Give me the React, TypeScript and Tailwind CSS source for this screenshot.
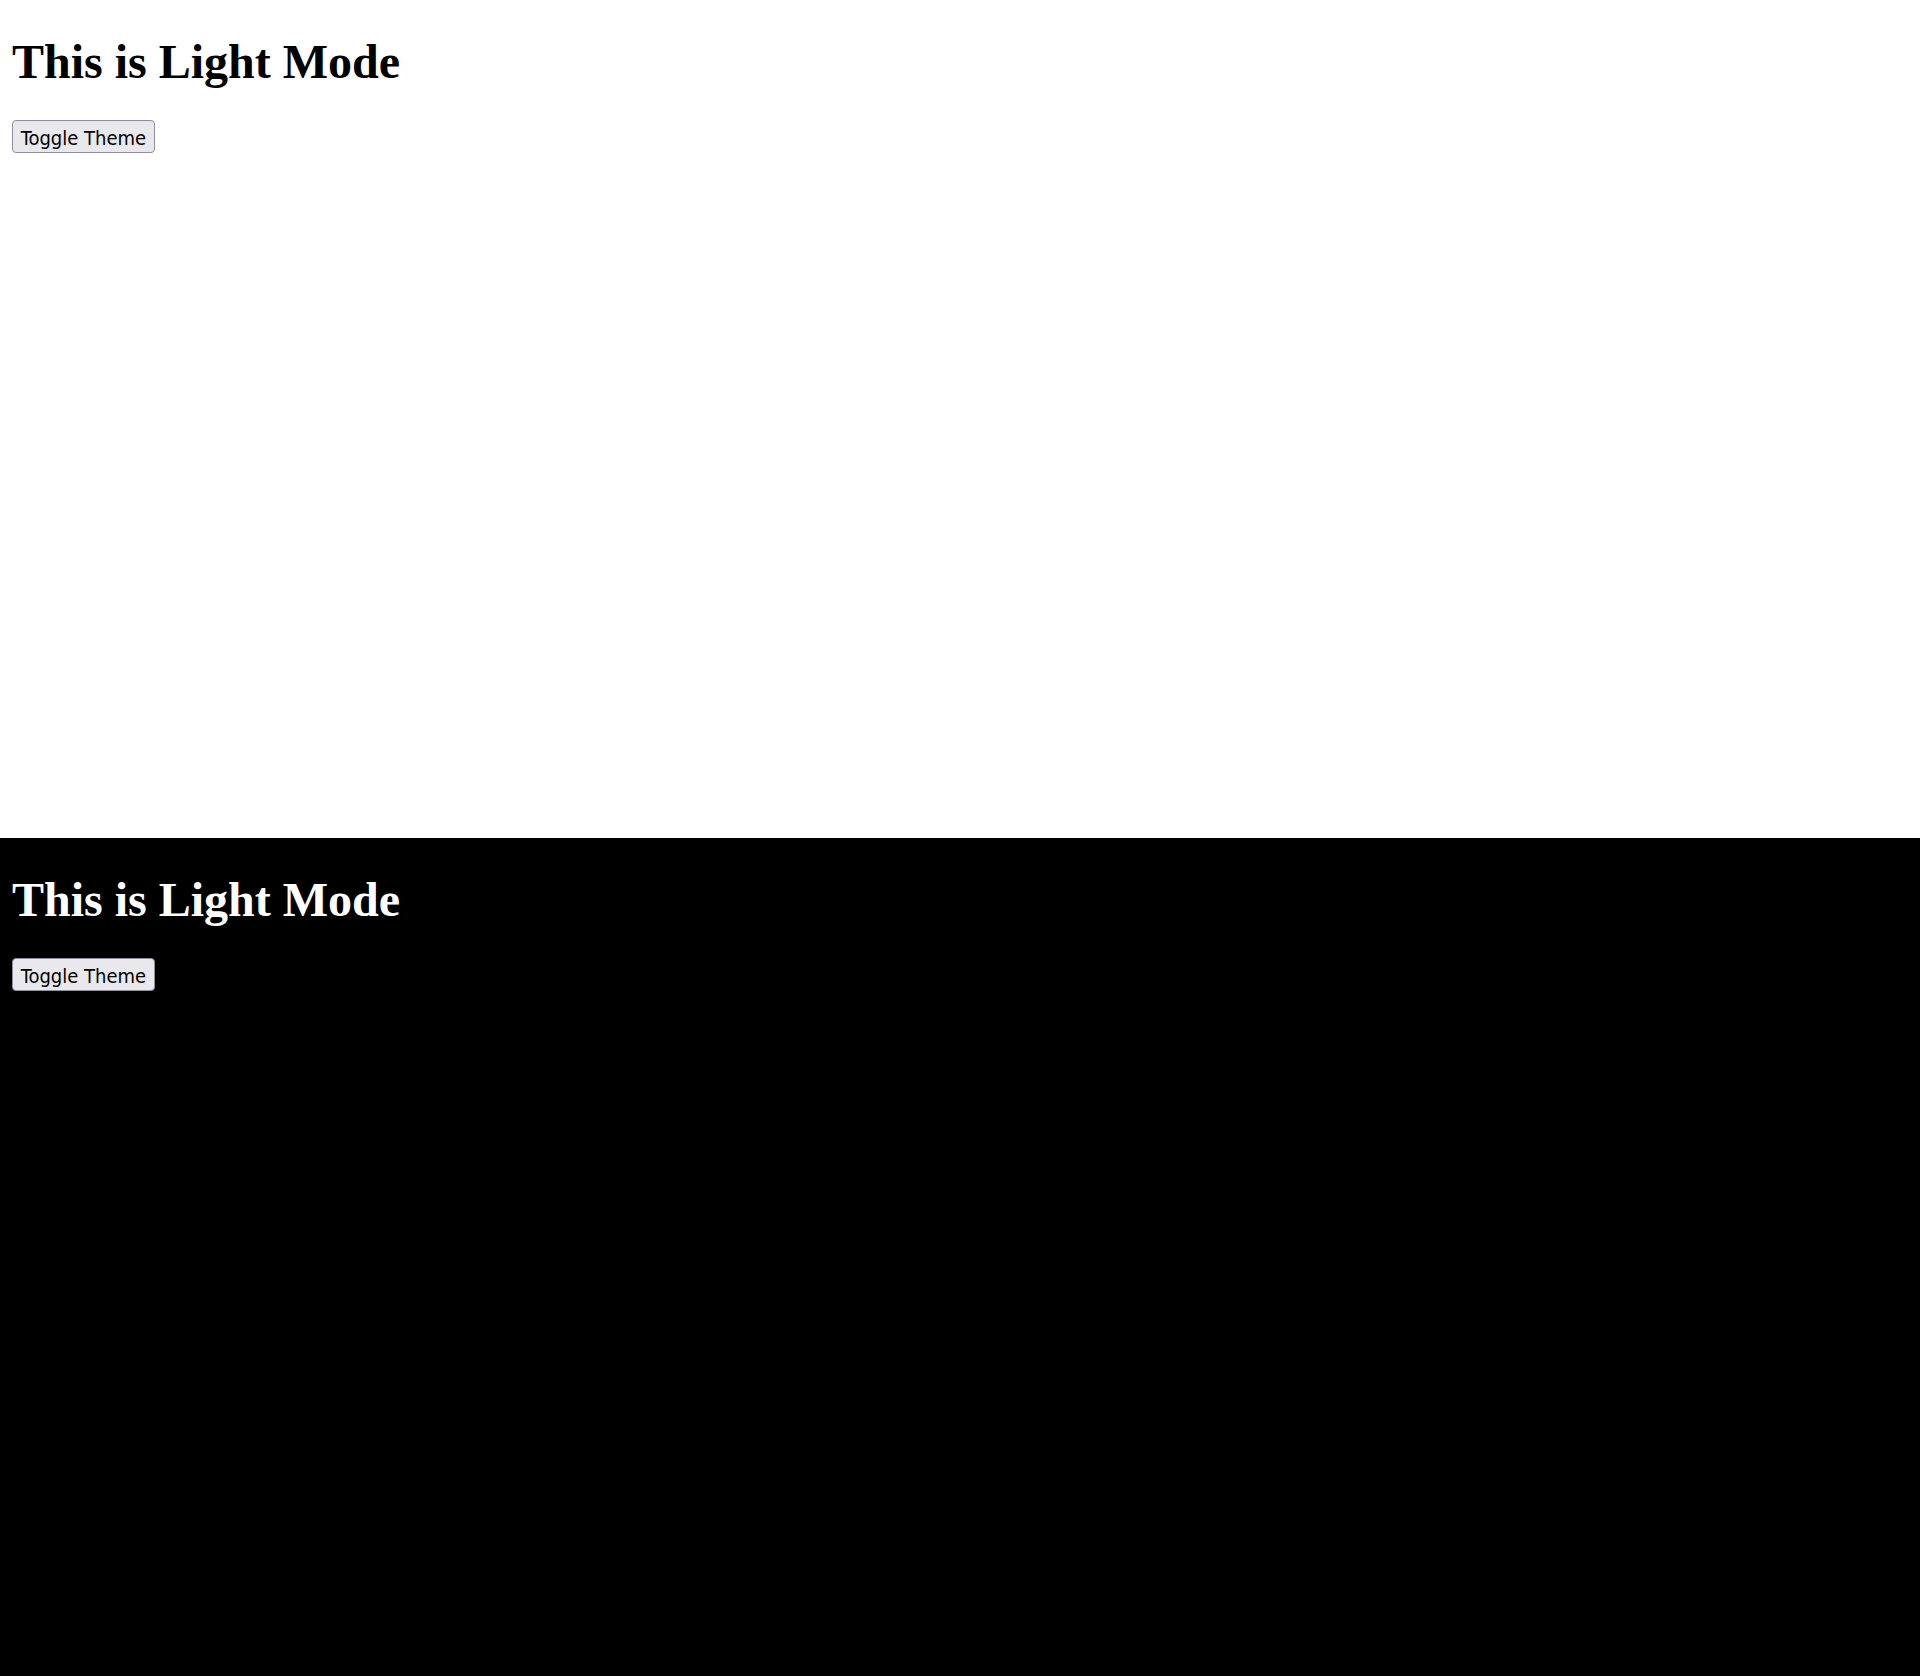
import { useState } from 'react';

function ThemePanel({ dark }: { dark: boolean }) {
  const [light, setLight] = useState(true);

  return (
    <section
      className={`h-[838px] pl-[12px] pt-[34px] ${dark ? 'bg-black text-white' : 'bg-white text-black'}`}
    >
      <h1
        className="m-0 text-[48px] leading-[55px] font-bold"
        style={{ fontFamily: '"Liberation Serif", "Times New Roman", serif' }}
      >
        {light ? 'This is Light Mode' : 'This is Light Mode'}
      </h1>
      <button
        onClick={() => setLight(!light)}
        className="mt-[31px] flex h-[33px] w-[143px] items-center justify-center rounded-[4px] border border-[#8f8f9d] bg-[#e9e9ed] pt-[3px] text-[20px] text-black"
        style={{ fontFamily: '"DejaVu Sans Condensed", "DejaVu Sans", sans-serif', fontStretch: 'condensed' }}
      >
        Toggle Theme
      </button>
    </section>
  );
}

export default function App() {
  return (
    <div className="w-full">
      <ThemePanel dark={false} />
      <ThemePanel dark={true} />
    </div>
  );
}
